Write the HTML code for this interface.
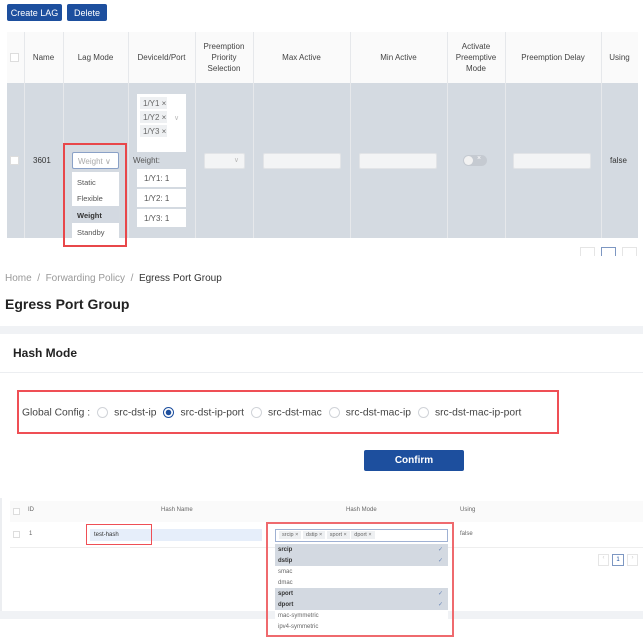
<!DOCTYPE html>
<html><head><meta charset="utf-8"><style>
*{box-sizing:border-box;margin:0;padding:0}
body{width:643px;height:638px;overflow:hidden;background:#fff;font-family:"Liberation Sans",sans-serif;position:relative;color:#333}
.a{position:absolute}
.btn{background:#1d4f9e;color:#fff;font-size:9px;border-radius:2px;display:flex;align-items:center;justify-content:center}
.th{font-size:8px;color:#444;text-align:center;display:flex;align-items:center;justify-content:center;line-height:11px}
.vl{width:1px;background:#e6e8eb}
.inp{background:#f3f4f5;border:1px solid #e2e4e7;border-radius:2px}
.wi{background:#fff;font-size:8px;color:#555;padding-left:7px;display:flex;align-items:center}
.tag{background:#eef0f2;font-size:7px;color:#666;padding:1px 3px}
.dt{background:#eef0f2;font-size:8px;color:#666;padding:2px 3px;width:27px;height:12px;margin-bottom:2px;white-space:nowrap}
.radio{width:11px;height:11px;border:1px solid #d0d3d8;border-radius:50%;display:inline-block;vertical-align:middle;margin:0 6px 0 7px}
.rl{font-size:10.3px;color:#444;vertical-align:middle}
.opt{font-size:6px;color:#666;padding-left:3px;display:flex;align-items:center;height:11px;justify-content:space-between;padding-right:5px}
.sel{background:#d3d9e1;color:#333;font-weight:bold}
.chk{color:#6a86b8;font-weight:normal}
</style></head><body>
<div class="a btn" style="left:7px;top:4px;width:55px;height:17px">Create LAG</div>
<div class="a btn" style="left:67px;top:4px;width:40px;height:17px">Delete</div>

<div class="a" style="left:7px;top:32px;width:631px;height:51px;background:#fafafa"></div>
<div class="a" style="left:7px;top:83px;width:631px;height:155px;background:#d4dae1"></div>
<div class="a vl" style="left:24px;top:32px;height:206px"></div>
<div class="a vl" style="left:63px;top:32px;height:206px"></div>
<div class="a vl" style="left:128px;top:32px;height:206px"></div>
<div class="a vl" style="left:195px;top:32px;height:206px"></div>
<div class="a vl" style="left:253px;top:32px;height:206px"></div>
<div class="a vl" style="left:350px;top:32px;height:206px"></div>
<div class="a vl" style="left:447px;top:32px;height:206px"></div>
<div class="a vl" style="left:505px;top:32px;height:206px"></div>
<div class="a vl" style="left:601px;top:32px;height:206px"></div>
<div class="a" style="left:10px;top:53px;width:9px;height:9px;background:#fff;border:1px solid #ddd"></div>
<div class="a th" style="left:24px;top:32px;width:39px;height:51px">Name</div>
<div class="a th" style="left:63px;top:32px;width:65px;height:51px">Lag Mode</div>
<div class="a th" style="left:128px;top:32px;width:67px;height:51px">DeviceId/Port</div>
<div class="a th" style="left:195px;top:32px;width:58px;height:51px">Preemption<br>Priority<br>Selection</div>
<div class="a th" style="left:253px;top:32px;width:97px;height:51px">Max Active</div>
<div class="a th" style="left:350px;top:32px;width:97px;height:51px">Min Active</div>
<div class="a th" style="left:447px;top:32px;width:58px;height:51px">Activate<br>Preemptive<br>Mode</div>
<div class="a th" style="left:505px;top:32px;width:96px;height:51px">Preemption Delay</div>
<div class="a th" style="left:601px;top:32px;width:37px;height:51px">Using</div>

<div class="a" style="left:10px;top:156px;width:9px;height:9px;background:#fff;border:1px solid #ddd"></div>
<div class="a" style="left:33px;top:156px;font-size:8px">3601</div>
<div class="a" style="left:72px;top:152px;width:47px;height:17px;background:#fff;border:1px solid #8aa1c7;border-radius:2px;font-size:8px;color:#aaa;padding:4px 0 0 5px">Weight ∨</div>
<div class="a" style="left:72px;top:172px;width:47px;height:72px;background:#fff;font-size:7.5px;color:#555">
<div style="height:17px;padding:6px 0 0 5px">Static</div>
<div style="height:17px;padding:5px 0 0 5px">Flexible</div>
<div style="height:17px;padding:5px 0 0 5px;background:#d3d9e1;font-weight:bold;color:#333">Weight</div>
<div style="height:17px;padding:5px 0 0 5px">Standby</div></div>
<div class="a" style="left:63px;top:143px;width:64px;height:104px;border:2px solid #e8474a"></div>

<div class="a" style="left:137px;top:94px;width:49px;height:58px;background:#fff;padding:3px 0 0 3px">
<div class="dt">1/Y1 ×</div><div class="dt">1/Y2 ×</div><div class="dt">1/Y3 ×</div>
<div class="a" style="left:37px;top:20px;font-size:7px;color:#bbb">∨</div></div>
<div class="a" style="left:133px;top:156px;font-size:8px;color:#555">Weight:</div>
<div class="a wi" style="left:137px;top:169px;width:49px;height:18px">1/Y1: 1</div>
<div class="a wi" style="left:137px;top:189px;width:49px;height:18px">1/Y2: 1</div>
<div class="a wi" style="left:137px;top:209px;width:49px;height:18px">1/Y3: 1</div>
<div class="a inp" style="left:204px;top:153px;width:41px;height:16px"><span style="position:absolute;right:5px;top:2px;font-size:7px;color:#bbb">∨</span></div>
<div class="a inp" style="left:263px;top:153px;width:78px;height:16px"></div>
<div class="a inp" style="left:359px;top:153px;width:78px;height:16px"></div>
<div class="a" style="left:463px;top:155px;width:24px;height:11px;border-radius:6px;background:#c5cad1"><div style="position:absolute;left:1px;top:1px;width:9px;height:9px;border-radius:50%;background:#f2f2f2"></div><span style="position:absolute;left:14px;top:0;font-size:7px;color:#fff">×</span></div>
<div class="a inp" style="left:513px;top:153px;width:78px;height:16px"></div>
<div class="a" style="left:610px;top:156px;font-size:8px">false</div>
<div class="a" style="left:580px;top:247px;width:15px;height:9px;border:1px solid #e5e5e5;border-bottom:none"></div>
<div class="a" style="left:601px;top:247px;width:15px;height:9px;border:1px solid #7d97c2;border-bottom:none"></div>
<div class="a" style="left:622px;top:247px;width:15px;height:9px;border:1px solid #e5e5e5;border-bottom:none"></div>

<div class="a" style="left:5px;top:273px;font-size:10px;color:#999">Home &nbsp;/&nbsp; Forwarding Policy &nbsp;/&nbsp; <span style="color:#333">Egress Port Group</span></div>
<div class="a" style="left:5px;top:296px;font-size:14px;font-weight:bold;color:#222">Egress Port Group</div>
<div class="a" style="left:0;top:326px;width:643px;height:8px;background:#f0f2f5"></div>
<div class="a" style="left:13px;top:346px;font-size:12px;font-weight:bold;color:#222">Hash Mode</div>
<div class="a" style="left:0;top:372px;width:643px;height:1px;background:#eceef1"></div>
<div class="a" style="left:17px;top:390px;width:542px;height:44px;border:2px solid #ef4f55;padding:12px 0 0 3px;white-space:nowrap">
<span class="rl">Global Config :</span><span class="radio"></span><span class="rl">src-dst-ip</span><span class="radio" style="border-color:#1d4f9e;background:radial-gradient(circle,#1d4f9e 2.5px,#fff 3px)"></span><span class="rl">src-dst-ip-port</span><span class="radio"></span><span class="rl">src-dst-mac</span><span class="radio"></span><span class="rl">src-dst-mac-ip</span><span class="radio"></span><span class="rl">src-dst-mac-ip-port</span></div>
<div class="a btn" style="left:364px;top:450px;width:100px;height:21px;font-size:10px;font-weight:bold">Confirm</div>

<div class="a" style="left:0;top:498px;width:2px;height:113px;background:#eceef1"></div>
<div class="a" style="left:10px;top:501px;width:633px;height:21px;background:#fafafa"></div>
<div class="a" style="left:10px;top:547px;width:633px;height:1px;background:#eee"></div>
<div class="a" style="left:13px;top:508px;width:7px;height:7px;border:1px solid #ddd;background:#fff"></div>
<div class="a" style="left:13px;top:531px;width:7px;height:7px;border:1px solid #ddd;background:#fff"></div>
<div class="a" style="left:28px;top:507px;font-size:6px;color:#666">ID</div>
<div class="a" style="left:161px;top:507px;font-size:6px;color:#666">Hash Name</div>
<div class="a" style="left:346px;top:507px;font-size:6px;color:#666">Hash Mode</div>
<div class="a" style="left:460px;top:507px;font-size:6px;color:#666">Using</div>
<div class="a" style="left:29px;top:531px;font-size:6px;color:#666">1</div>
<div class="a" style="left:90px;top:529px;width:172px;height:12px;background:#e6eefa;font-size:6px;padding:3px 0 0 4px;color:#333">test-hash</div>
<div class="a" style="left:86px;top:524px;width:66px;height:21px;border:1px solid #ef4f55"></div>
<div class="a" style="left:460px;top:531px;font-size:6px;color:#666">false</div>
<div class="a" style="left:275px;top:529px;width:173px;height:13px;border:1px solid #9fb1d3;background:#fff;padding:2px 0 0 3px;font-size:5.5px;color:#555;white-space:nowrap"><span class="tag" style="font-size:5.5px">srcip ×</span> <span class="tag" style="font-size:5.5px">dstip ×</span> <span class="tag" style="font-size:5.5px">sport ×</span> <span class="tag" style="font-size:5.5px">dport ×</span></div>
<div class="a" style="left:0;top:611px;width:643px;height:8px;background:#f0f2f5"></div>
<div class="a" style="left:275px;top:544px;width:173px;height:94px;background:#fff">
<div class="opt sel">srcip<span class="chk">✓</span></div><div class="opt sel">dstip<span class="chk">✓</span></div>
<div class="opt">smac</div><div class="opt">dmac</div>
<div class="opt sel">sport<span class="chk">✓</span></div><div class="opt sel">dport<span class="chk">✓</span></div>
<div class="opt">mac-symmetric</div><div class="opt">ipv4-symmetric</div></div>
<div class="a" style="left:266px;top:522px;width:188px;height:115px;border:2px solid #ef6a6e"></div>
<div class="a" style="left:598px;top:554px;width:11px;height:12px;border:1px solid #e5e5e5;font-size:6px;color:#ccc;text-align:center">‹</div>
<div class="a" style="left:612px;top:554px;width:12px;height:12px;border:1px solid #7d97c2;font-size:6px;color:#1d4f9e;text-align:center;padding-top:2px">1</div>
<div class="a" style="left:627px;top:554px;width:11px;height:12px;border:1px solid #e5e5e5;font-size:6px;color:#ccc;text-align:center">›</div>
</body></html>
